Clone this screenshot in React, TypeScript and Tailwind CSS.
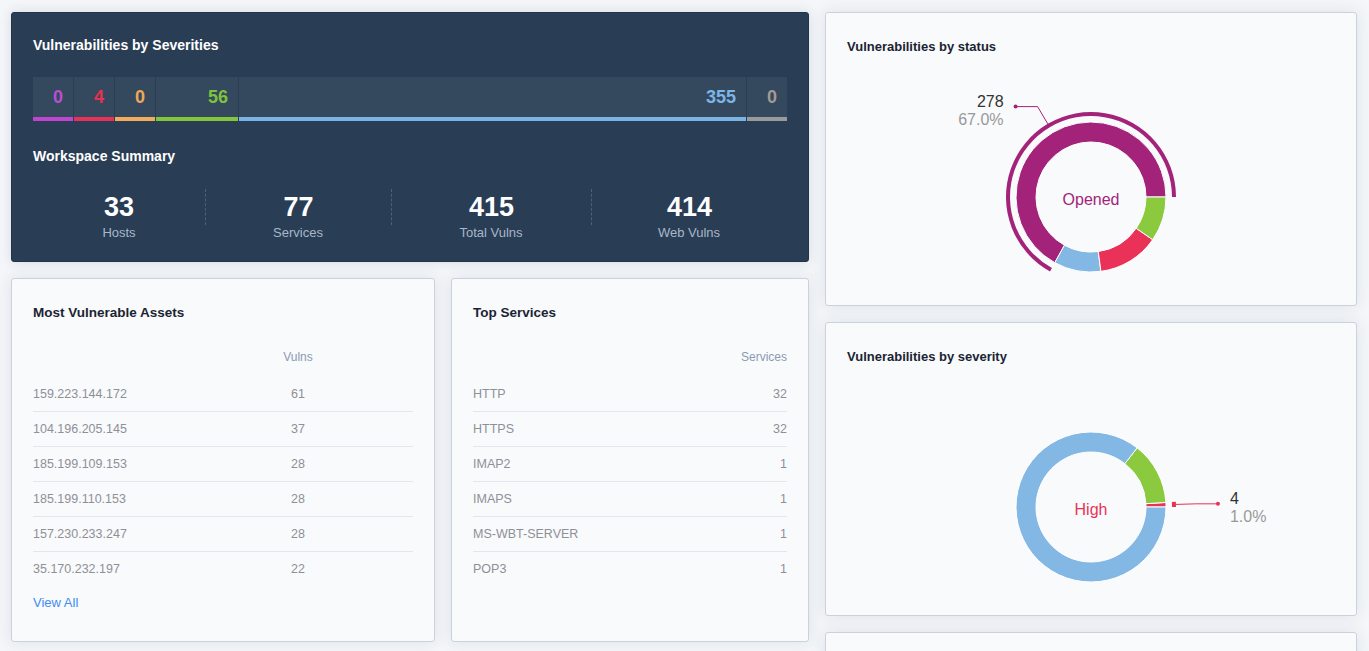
import React from "react";

type Slice = { name: string; value: number; color: string };

const severityBar = [
  { value: 0, text: "text-[#b84fd3]", strip: "bg-[#c044cf]", width: "w-[40px]" },
  { value: 4, text: "text-[#e8304f]", strip: "bg-[#e8315a]", width: "w-[40px]" },
  { value: 0, text: "text-[#efa859]", strip: "bg-[#f2ad5c]", width: "w-[40px]" },
  { value: 56, text: "text-[#7ec33d]", strip: "bg-[#84c63b]", width: "w-[82px]" },
  { value: 355, text: "text-[#7cb5e6]", strip: "bg-[#7ab4e4]", width: "flex-1" },
  { value: 0, text: "text-[#a39a94]", strip: "bg-[#9a9a9a]", width: "w-[40px]" },
];

const summary = [
  { value: 33, label: "Hosts", width: "w-[172px]", divider: "" },
  { value: 77, label: "Services", width: "w-[186px]", divider: "border-l border-dashed border-[#4d6077]" },
  { value: 415, label: "Total Vulns", width: "w-[200px]", divider: "border-l border-dashed border-[#4d6077]" },
  { value: 414, label: "Web Vulns", width: "w-[196px]", divider: "border-l border-dashed border-[#4d6077]" },
];

const assets = [
  ["159.223.144.172", 61],
  ["104.196.205.145", 37],
  ["185.199.109.153", 28],
  ["185.199.110.153", 28],
  ["157.230.233.247", 28],
  ["35.170.232.197", 22],
] as const;

const services = [
  ["HTTP", 32],
  ["HTTPS", 32],
  ["IMAP2", 1],
  ["IMAPS", 1],
  ["MS-WBT-SERVER", 1],
  ["POP3", 1],
] as const;

const statusData: Slice[] = [
  { name: "Opened", value: 278, color: "#a3237a" },
  { name: "Closed", value: 42, color: "#83b8e5" },
  { name: "Re-Opened", value: 55, color: "#ea3157" },
  { name: "Risk-Accepted", value: 40, color: "#8bc93f" },
];

const severityData: Slice[] = [
  { name: "Critical", value: 0, color: "#b84fd3" },
  { name: "High", value: 4, color: "#e83355" },
  { name: "Medium", value: 0, color: "#efa859" },
  { name: "Low", value: 56, color: "#8bc93f" },
  { name: "Info", value: 355, color: "#84b8e4" },
  { name: "Unclassified", value: 0, color: "#9a9a9a" },
];

const rad = (d: number) => (d * Math.PI) / 180;

function pt(cx: number, cy: number, r: number, a: number) {
  return [cx + r * Math.cos(rad(a)), cy - r * Math.sin(rad(a))];
}

// annular sector, angles in degrees, counter-clockwise from 3 o'clock
function sector(cx: number, cy: number, ri: number, ro: number, a0: number, a1: number) {
  const large = a1 - a0 > 180 ? 1 : 0;
  const [x0, y0] = pt(cx, cy, ro, a0);
  const [x1, y1] = pt(cx, cy, ro, a1);
  const [x2, y2] = pt(cx, cy, ri, a1);
  const [x3, y3] = pt(cx, cy, ri, a0);
  return `M${x0},${y0} A${ro},${ro} 0 ${large} 0 ${x1},${y1} L${x2},${y2} A${ri},${ri} 0 ${large} 1 ${x3},${y3} Z`;
}

function Donut({ data, active }: { data: Slice[]; active: number }) {
  const cx = 265;
  const cy = 142;
  const ri = 55;
  const ro = 75;
  const total = data.reduce((s, d) => s + d.value, 0);

  let angle = 0;
  const arcs = data.map((d) => {
    const a0 = angle;
    angle += (d.value / total) * 360;
    return { ...d, a0, a1: angle };
  });

  const act = arcs[active];
  const mid = (act.a0 + act.a1) / 2;
  const cos = Math.cos(rad(mid));
  const sin = Math.sin(rad(mid));
  const sx = cx + (ro + 10) * cos;
  const sy = cy - (ro + 10) * sin;
  const mx = cx + (ro + 30) * cos;
  const my = cy - (ro + 30) * sin;
  const ex = mx + (cos >= 0 ? 1 : -1) * 22;
  const ey = my;
  const anchor = cos >= 0 ? "start" : "end";
  const tx = ex + (cos >= 0 ? 1 : -1) * 12;

  return (
    <svg width={530} height={250} className="block">
      {arcs
        .filter((a) => a.value > 0)
        .map((a) => (
          <path key={a.name} d={sector(cx, cy, ri, ro, a.a0, a.a1)} fill={a.color} stroke="#fff" strokeWidth={1} />
        ))}
      <path d={sector(cx, cy, ro + 6, ro + 10, act.a0, act.a1)} fill={act.color} />
      <path d={`M${sx},${sy}L${mx},${my}L${ex},${ey}`} stroke={act.color} fill="none" />
      <circle cx={ex} cy={ey} r={2} fill={act.color} />
      <text x={cx} y={cy} dy={8} textAnchor="middle" fill={act.color} fontSize={16}>
        {act.name}
      </text>
      <text x={tx} y={ey} textAnchor={anchor} fill="#333" fontSize={16}>
        {act.value}
      </text>
      <text x={tx} y={ey} dy={18} textAnchor={anchor} fill="#999" fontSize={16}>
        {((act.value / total) * 100).toFixed(1)}%
      </text>
    </svg>
  );
}

const lightCard =
  "rounded-[3px] border border-[#cbd2dc] bg-[#f9fafc] shadow-[0_0_16px_rgba(40,60,90,0.11)]";

function ListCard({
  title,
  header,
  rows,
  align,
  footer,
  className,
}: {
  title: string;
  header: string;
  rows: readonly (readonly [string, number])[];
  align: "center" | "right";
  footer?: string;
  className: string;
}) {
  const cols = align === "center" ? "grid-cols-[1fr_230px]" : "grid-cols-[1fr_120px]";
  const cell = align === "center" ? "text-center" : "text-right";
  return (
    <div className={`${lightCard} ${className} h-[364px] px-[21px] pt-[26px]`}>
      <div className="text-[13.5px] font-bold leading-4 text-[#1b2432]">{title}</div>
      <div className={`mt-[28px] grid ${cols} text-[12px] leading-4 text-[#8a9bb2]`}>
        <div />
        <div className={cell}>{header}</div>
      </div>
      <div className="mt-[12px]">
        {rows.map(([name, n], i) => (
          <div
            key={name}
            className={`grid ${cols} h-[35px] items-center text-[12.5px] text-[#8e9097] ${
              i < rows.length - 1 ? "border-b border-[#e3e7ec]" : ""
            }`}
          >
            <div>{name}</div>
            <div className={cell}>{n}</div>
          </div>
        ))}
      </div>
      {footer && <div className="mt-[8px] text-[13px] leading-4 text-[#3f8cf3]">{footer}</div>}
    </div>
  );
}

function ChartCard({ title, children }: { title: string; children?: React.ReactNode }) {
  return (
    <div className={`${lightCard} h-[294px] shrink-0`}>
      <div className="px-[21px] pt-[26px] text-[13px] font-bold leading-4 text-[#1b2432]">{title}</div>
      {children}
    </div>
  );
}

export default function App() {
  return (
    <div className="flex h-[651px] w-[1369px] gap-4 overflow-hidden bg-[#f4f6f9] pl-[11px] pr-[12px] pt-[12px] font-['Liberation_Sans',Arial,sans-serif]">
      {/* left column */}
      <div className="flex w-[798px] shrink-0 flex-col gap-4">
        <div className="h-[250px] rounded-[3px] border border-[#22344a] bg-[#293d55] px-[21px] pt-[24px] shadow-[0_0_12px_rgba(40,60,90,0.15)]">
          <div className="text-[14px] font-bold leading-4 text-white">Vulnerabilities by Severities</div>

          <div className="mt-[24px] flex h-[44px] gap-px">
            {severityBar.map((s, i) => (
              <div key={i} className={`${s.width} flex flex-col bg-[#34485e]`}>
                <div className={`flex flex-1 items-center justify-end pr-[10px] text-[18px] font-bold ${s.text}`}>
                  {s.value}
                </div>
                <div className={`h-[4px] ${s.strip}`} />
              </div>
            ))}
          </div>

          <div className="mt-[27px] text-[14px] font-bold leading-4 text-white">Workspace Summary</div>

          <div className="mt-[25px] flex">
            {summary.map((s) => (
              <div key={s.label} className={`${s.width} flex flex-col items-center`}>
                <div className={`flex h-[36px] w-full items-center justify-center text-[27px] font-bold text-white ${s.divider}`}>
                  {s.value}
                </div>
                <div className="text-[13px] leading-4 text-[#a8b7c8]">{s.label}</div>
              </div>
            ))}
          </div>
        </div>

        <div className="flex gap-4">
          <ListCard
            title="Most Vulnerable Assets"
            header="Vulns"
            rows={assets}
            align="center"
            footer="View All"
            className="w-[424px]"
          />
          <ListCard title="Top Services" header="Services" rows={services} align="right" className="w-[358px]" />
        </div>
      </div>

      {/* right column */}
      <div className="flex w-[532px] shrink-0 flex-col gap-4">
        <ChartCard title="Vulnerabilities by status">
          <Donut data={statusData} active={0} />
        </ChartCard>
        <ChartCard title="Vulnerabilities by severity">
          <Donut data={severityData} active={1} />
        </ChartCard>
        <ChartCard title="" />
      </div>
    </div>
  );
}
